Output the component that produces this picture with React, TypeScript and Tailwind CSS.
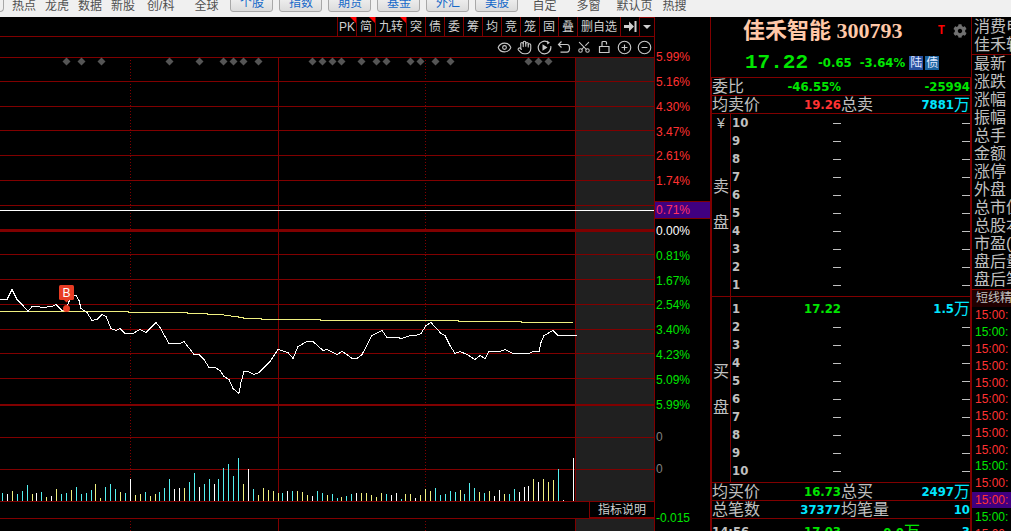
import type { ReactNode } from "react";
import clsx from "clsx";
import { CircleMinus, CirclePlus, Eye, Hand, Scissors } from "lucide-react";
import { FaCog } from "react-icons/fa";

const CJK = "font-['Liberation_Sans','Noto_Sans_CJK_SC',sans-serif]";
const NUM =
  "font-['DejaVu_Sans_Condensed','Noto_Sans_CJK_SC',sans-serif] text-[13px] font-bold";

const MARKETS = ["个股", "指数", "期货", "基金", "外汇", "美股"];

const TOOLS = [
  { label: "PK", flag: true },
  { label: "简", flag: true },
  { label: "九转", flag: true, wide: true },
  { label: "突" },
  { label: "债" },
  { label: "委" },
  { label: "筹" },
  { label: "均" },
  { label: "竞" },
  { label: "笼" },
  { label: "固" },
  { label: "叠" },
  { label: "删自选", wide: true },
];

const AXIS = [
  "5.99%", "5.16%", "4.30%", "3.47%", "2.61%", "1.74%", "", "0.00%",
  "0.81%", "1.67%", "2.54%", "3.40%", "4.23%", "5.09%", "5.99%",
];

const GRID = [81, 106, 130, 155, 180, 205, 254, 279, 304, 329, 353, 378, 437, 469];

const DIAMONDS = [
  66, 81, 101, 169, 199, 223, 233, 243, 258, 312, 322, 332, 341, 361, 376, 386,
  410, 420, 435, 450, 528, 538, 548,
];

const PRICE =
  "0,299 7,299 12,289 17,299 23,305 28,311 32,306 38,306 42,307 52,306 56,304 62,310 66,309 69,301 72,295 76,295 79,300 81,308 87,312 92,320 97,319 102,314 106,316 111,328 116,330 120,328 125,333 133,333 140,329 146,332 156,322 160,327 169,343 180,343 184,341 194,354 199,354 204,359 209,367 215,367 220,370 224,376 229,379 233,388 239,393 241,382 244,371 248,371 254,374 259,372 270,361 278,349 288,352 293,358 298,346 307,341 313,341 323,350 327,349 337,354 342,351 347,354 352,358 357,358 362,354 372,335 382,330 387,337 397,337 402,338 410,335 416,335 421,333 426,325 431,322 441,333 445,335 450,345 455,353 460,351 467,354 475,359 480,355 485,358 489,351 500,351 505,349 513,353 529,353 533,351 539,351 541,342 544,335 553,330 558,335 577,335";

const AVERAGE =
  "0,311 128,311 128,312 187,312 187,313 207,313 207,314 222,314 226,315 236,316 241,317 246,318 261,318 261,319 320,319 320,320 458,320 458,321 521,321 521,322 573,322";

// colour initial + height, one entry per minute bar
const VOLUME =
  "c8 w7 y10 c7 c10 c16 y7 w8 c9 y4 w5 y12 c7 c8 y11 c14 c7 c8 c11 y17 y3 c14 c17 c12 y9 c8 w22 y6 y7 c9 y5 y7 c9 c13 c22 w12 w13 y13 c19 c28 w14 c17 c22 w17 c22 c33 c37 c25 c43 y17 w32 c12 y6 y13 y11 y10 y8 c8 w10 c10 y10 y9 y6 w5 c10 c8 y6 c7 c3 y4 c5 c7 w8 y8 y8 y6 y4 y8 c7 w6 w8 c2 y7 y7 w3 y6 y12 y10 c13 c6 c7 c10 c9 y11 c7 c18 c13 y9 c8 y10 w5 w11 y7 c7 c12 w9 w14 w15 y22 w19 y22 y19 y21 c32 w1 w0 w43".split(" ");

const BAR_COLORS: Record<string, string> = {
  c: "#54f0f0",
  w: "#ffffff",
  y: "#f0f080",
};

const STATS = [
  "最新", "涨跌", "涨幅", "振幅", "总手", "金额", "涨停", "外盘", "总市值",
  "总股本", "市盈(动)", "盘后量", "盘后笔",
];

// r = up, g = down, s = selected
const TICKS = "r g r r r r r r r g r s g r".split(" ");

function NavLink({ children, className }: { children: ReactNode; className?: string }) {
  return (
    <a href="#" className={clsx("whitespace-nowrap", className)}>
      {children}
    </a>
  );
}

function TopNav() {
  return (
    <nav className="flex h-[17px] shrink-0 items-end overflow-hidden bg-[#f0f0f0] pb-[3px] text-xs leading-4 text-[#505050]">
      <span className="mb-0.5 h-5 w-1 shrink-0 rounded-br border-r border-b border-[#a8a8a8]" />
      <div className="flex gap-[9px] pl-2">
        <NavLink>热点</NavLink>
        <NavLink>龙虎</NavLink>
        <NavLink>数据</NavLink>
        <NavLink>新股</NavLink>
      </div>
      <NavLink className="ml-3">创/科</NavLink>
      <NavLink className="ml-5">全球</NavLink>
      <div className="mb-0.5 ml-3 flex gap-1.5">
        {MARKETS.map((m) => (
          <button
            key={m}
            type="button"
            className="h-[18px] w-[43px] rounded-[3px] border border-[#a8a8a8] bg-linear-to-b from-[#f4f4f4] to-[#dcdcdc] leading-4 text-[#1468c8]"
          >
            {m}
          </button>
        ))}
      </div>
      <NavLink className="ml-3.5">自定</NavLink>
      <NavLink className="ml-5">多窗</NavLink>
      <NavLink className="ml-4">默认页</NavLink>
      <NavLink className="ml-2.5">热搜</NavLink>
    </nav>
  );
}

function ReplayIcon() {
  return (
    <svg width="15" height="15" viewBox="0 0 15 15" fill="none" stroke="currentColor" strokeWidth="1.2">
      <path d="M13.7 6.2A6.3 6.3 0 1 1 10.600 2M13.500 8.800A6.300 6.300 0 0 1 11 12.700" />
      <path d="M10 0.500 13 2.800 10.200 4.500z" fill="currentColor" stroke="none" />
      <path d="M5.500 4.200v6.600L10.500 7.500z" fill="currentColor" stroke="none" />
    </svg>
  );
}

function UndoIcon() {
  return (
    <svg width="14" height="14" viewBox="0 0 14 14" fill="none" stroke="currentColor" strokeWidth="1.2">
      <path d="M4.500 1.500 1.500 4.500l3 3M1.500 4.500h8.500a2.500 3.800 0 0 1 0 7.600H3.500" />
    </svg>
  );
}

function UnlockIcon() {
  return (
    <svg width="14" height="14" viewBox="0 0 14 14" fill="none" stroke="currentColor" strokeWidth="1.2">
      <path d="M2.500 6.500h9.500v6h-9.500zM5 6.500V2.500a1 1 0 0 1 1-1h2.500a1 1 0 0 1 1 1V4.500" />
    </svg>
  );
}

function ToolBar() {
  return (
    <div className="flex h-5 shrink-0 justify-end border-b border-[#800000] text-xs text-[#d0d0d0]">
      {TOOLS.map((t) => (
        <button
          key={t.label}
          type="button"
          className={clsx(
            "relative min-w-[19px] border-l border-[#800000] leading-5 whitespace-nowrap",
            t.wide ? "px-[3px]" : "px-px",
          )}
        >
          {t.label}
          {t.flag && (
            <span className="absolute top-0 right-0 border-t-[6px] border-l-[6px] border-t-[#ff0000] border-l-transparent" />
          )}
        </button>
      ))}
      <button
        type="button"
        aria-label="下一个"
        className="flex w-[19px] items-center justify-center border-l border-[#800000]"
      >
        <svg width="13" height="11" viewBox="0 0 13 11" fill="currentColor">
          <path d="M0 4h5V0.500l5 5-5 5V7H0zM10.500 0h2v11h-2z" />
        </svg>
      </button>
      <button
        type="button"
        aria-label="更多"
        className="flex w-[15px] items-center justify-center border-t border-l border-[#800000]"
      >
        <svg width="8" height="4" viewBox="0 0 8 4" fill="currentColor">
          <path d="M0 0h8L4 4z" />
        </svg>
      </button>
    </div>
  );
}

function DrawBar() {
  const icons: [string, ReactNode][] = [
    ["显示", <Eye size={15} strokeWidth={1.8} />],
    ["拖动", <Hand size={15} strokeWidth={1.8} />],
    ["回放", <ReplayIcon />],
    ["撤销", <UndoIcon />],
    ["剪切", <Scissors size={14} strokeWidth={1.8} className="-rotate-90" />],
    ["锁定", <UnlockIcon />],
    ["放大", <CirclePlus size={15} strokeWidth={1.8} />],
    ["缩小", <CircleMinus size={15} strokeWidth={1.8} />],
  ];
  return (
    <div className="flex h-5 shrink-0 items-center justify-end text-[#c8c8c8]">
      {icons.map(([label, icon]) => (
        <button key={label} type="button" aria-label={label} className="flex w-5 justify-center">
          {icon}
        </button>
      ))}
    </div>
  );
}

function Chart() {
  return (
    <svg
      className="h-[445px] w-full shrink-0"
      viewBox="0 57 654 445"
      preserveAspectRatio="none"
      shapeRendering="crispEdges"
    >
      <rect x="576" y="58" width="78" height="443" fill="#202020" />
      <g fill="#800000">
        <rect x="0" y="57" width="654" height="1" />
        {GRID.map((y) => (
          <rect key={y} x="0" y={y} width="654" height="1" />
        ))}
        <rect x="0" y="229" width="654" height="3" />
        <rect x="0" y="404" width="654" height="2" />
        <rect x="0" y="501" width="654" height="1" />
        <rect x="278" y="57" width="1" height="445" />
        <rect x="575" y="57" width="1" height="445" />
      </g>
      <g stroke="#800000" strokeDasharray="1 2">
        <path d="M130.5 60V501M425.5 60V501" />
      </g>
      <rect x="0" y="210" width="654" height="1" fill="#ffffff" />
      {DIAMONDS.map((x) => (
        <path
          key={x}
          d={`M${x + 0.5} 57.5l4 4-4 4-4-4z`}
          fill="#555555"
          shapeRendering="auto"
        />
      ))}
      {VOLUME.map((v, i) => {
        const h = Number(v.slice(1));
        return (
          <rect
            key={i}
            x={Math.round(2 + i * 4.92)}
            y={501 - h}
            width="1"
            height={h}
            fill={BAR_COLORS[v[0]]}
          />
        );
      })}
      <g fill="none" transform="translate(0 0.5)">
        <polyline points={AVERAGE} stroke="#f0f080" />
        <polyline points={PRICE} stroke="#ffffff" />
      </g>
      <g fill="#e83c24" shapeRendering="auto">
        <rect x="59" y="285" width="15" height="15" rx="1.5" />
        <path d="M64 300h5l-2.5 2.5z" />
        <circle cx="66.5" cy="308.5" r="3.5" />
      </g>
      <text
        x="66.5"
        y="297"
        fill="#ffffff"
        fontFamily="Liberation Sans"
        fontSize="12"
        textAnchor="middle"
      >
        B
      </text>
    </svg>
  );
}

function NextPane() {
  return (
    <svg
      className="h-[13px] w-full shrink-0"
      viewBox="0 518 654 13"
      preserveAspectRatio="none"
      shapeRendering="crispEdges"
    >
      <rect x="576" y="519" width="78" height="12" fill="#202020" />
      <path d="M0 518.5H654M278.5 518V531M575.5 518V531" stroke="#800000" />
      <path d="M130.5 521V531M425.5 521V531" stroke="#800000" strokeDasharray="1 2" />
    </svg>
  );
}

function Axis() {
  return (
    <div className="relative flex w-[55px] shrink-0 flex-col pt-7 pl-px text-xs leading-6">
      <div className="flex h-[372px] flex-col justify-between">
        {AXIS.map((label, i) => (
          <div
            key={i}
            className={clsx(
              "h-6",
              i < 7 && "text-[#ff3232]",
              i === 7 && "text-white",
              i > 7 && "text-[#00e600]",
            )}
          >
            {label}
          </div>
        ))}
      </div>
      <div className="mt-2 text-[#808080]">0</div>
      <div className="mt-2 text-[#808080]">0</div>
      <div className="mt-[25px] text-[#00e600]">-0.015</div>
      <div className="absolute inset-x-0 top-[184px] h-[18px] border-y border-[#800000] bg-[#400080] pl-px leading-4 text-[#ff3264]">
        0.71%
      </div>
    </div>
  );
}

type Summary = [string, string, string, string, string, string];

function SummaryRow({ row, unit }: { row: Summary; unit?: string }) {
  const [l1, v1, c1, l2, v2, c2] = row;
  return (
    <div className="flex h-[18px] shrink-0 items-center border-b border-[#800000] text-base leading-4 whitespace-nowrap text-[#c0c0c0]">
      <div className="flex w-[129px] items-center justify-between">
        <span>{l1}</span>
        <span className={clsx(NUM, c1)}>{v1}</span>
      </div>
      <div className="flex flex-1 items-center justify-between">
        <span>{l2}</span>
        <span className={clsx("flex items-center", c2)}>
          <span className={NUM}>{v2}</span>
          {unit}
        </span>
      </div>
    </div>
  );
}

function Dash() {
  return <span className="ml-auto block h-px w-2 bg-[#c0c0c0]" />;
}

function Depth({ side, rows, bid }: { side: string; rows: number[]; bid?: boolean }) {
  return (
    <div className="flex border-b border-[#800000] text-base text-[#c0c0c0]">
      <div className="flex w-[19px] shrink-0 flex-col items-center border-r border-[#800000] leading-[18px]">
        {!bid && <span className="text-sm leading-[18px]">¥</span>}
        <div className={clsx("flex flex-col gap-[18px]", bid ? "mt-[66px]" : "mt-[46px]")}>
          <span>{side}</span>
          <span>盘</span>
        </div>
      </div>
      <table className={clsx("mb-0.5 w-full border-collapse", NUM, bid && "mt-[3px]")}>
        <tbody>
          {rows.map((n) => {
            const filled = bid && n === 1;
            return (
              <tr key={n} className="h-[18px] leading-[18px]">
                <th scope="row" className="p-0 pl-px text-left">
                  {n}
                </th>
                <td className="w-20 p-0 text-right">
                  {filled ? <span className="text-[#00e600]">17.22</span> : <Dash />}
                </td>
                <td className="w-[129px] p-0 text-right">
                  {filled ? (
                    <span className="flex items-center justify-end text-[#00e6ff]">
                      1.5<span className="text-base leading-[18px] font-normal">万</span>
                    </span>
                  ) : (
                    <Dash />
                  )}
                </td>
              </tr>
            );
          })}
        </tbody>
      </table>
    </div>
  );
}

function Quote() {
  return (
    <section className="flex w-[261px] shrink-0 flex-col border-l border-[#800000]">
      <header className="flex h-[60px] shrink-0 flex-col">
        <div className="flex h-7 items-center pl-8">
          <h1 className="font-['Liberation_Serif','Noto_Sans_CJK_SC',serif] text-[22px] leading-7 font-bold whitespace-nowrap text-[#ffc8a8]">
            佳禾智能 300793
          </h1>
          <span className="ml-auto font-['Liberation_Mono',monospace] text-xs font-bold text-[#ff0000]">
            T
          </span>
          <button type="button" aria-label="设置" className="mr-1 ml-2 text-[#707070]">
            <FaCog size={14} />
          </button>
        </div>
        <div className="flex flex-1 items-center pt-1 pl-[34px] text-[#00e600]">
          <span className="font-['Liberation_Mono',monospace] text-[21px] leading-6 font-bold">
            17.22
          </span>
          <span className={clsx(NUM, "ml-2.5")}>-0.65</span>
          <span className={clsx(NUM, "ml-2")}>-3.64%</span>
          <span className="ml-1 bg-[#2850a0] px-px text-xs leading-[14px] text-[#e0e8ff]">陆</span>
          <span className="ml-0.5 bg-[#1c64a0] px-px text-xs leading-[14px] text-[#e0e8ff]">债</span>
        </div>
      </header>
      <div className="flex flex-1 flex-col border-t border-r border-l border-[#800000]">
        <SummaryRow
          row={["委比", "-46.55%", "text-[#00e600]", "", "-25994", "text-[#00e600]"]}
        />
        <SummaryRow
          row={["均卖价", "19.26", "text-[#ff3232]", "总卖", "7881", "text-[#00e6ff]"]}
          unit="万"
        />
        <Depth side="卖" rows={[10, 9, 8, 7, 6, 5, 4, 3, 2, 1]} />
        <Depth side="买" rows={[1, 2, 3, 4, 5, 6, 7, 8, 9, 10]} bid />
        <SummaryRow
          row={["均买价", "16.73", "text-[#00e600]", "总买", "2497", "text-[#00e6ff]"]}
          unit="万"
        />
        <SummaryRow
          row={["总笔数", "37377", "text-[#00e6ff]", "均笔量", "10", "text-[#00e6ff]"]}
        />
        <div className={clsx("flex pt-1 leading-[18px] text-[#c0c0c0]", NUM)}>
          <span className="w-[50px]">14:56</span>
          <span className="w-[79px] text-right text-[#00e600]">17.03</span>
          <span className="w-[79px] text-right text-[#00e600]">
            0.0<span className="text-base leading-[18px] font-normal">万</span>
          </span>
          <span className="flex-1 text-right text-[#00e6ff]">3</span>
        </div>
      </div>
    </section>
  );
}

function SideList() {
  return (
    <aside className="flex w-10 shrink-0 flex-col overflow-hidden border-l border-[#800000] pt-px text-base leading-[18px] whitespace-nowrap text-[#c0c0c0]">
      <div className="border-b border-[#800000] pl-0.5">
        <div>消费电</div>
        <div>佳禾转</div>
      </div>
      <ul className="pl-0.5">
        {STATS.map((s) => (
          <li key={s}>{s}</li>
        ))}
      </ul>
      <div className="border-t border-[#800000] bg-[#200000] pl-1 text-xs leading-[17px]">
        短线精灵
      </div>
      <ul className="flex h-[235px] shrink-0 flex-col text-xs">
        {TICKS.map((t, i) => (
          <li
            key={i}
            className={clsx(
              "flex flex-1 items-center pl-[3px]",
              t === "g" ? "text-[#00e600]" : "text-[#ff3232]",
              t === "s" && "bg-[#400080]",
            )}
          >
            15:00:
          </li>
        ))}
      </ul>
    </aside>
  );
}

export default function App() {
  return (
    <div className={clsx("flex h-screen flex-col overflow-hidden bg-black", CJK)}>
      <TopNav />
      <main className="flex min-h-0 flex-1">
        <section className="flex min-w-0 flex-1 flex-col border-r border-[#800000]">
          <ToolBar />
          <DrawBar />
          <Chart />
          <div className="flex h-4 shrink-0 justify-end">
            <button
              type="button"
              className="border-b border-l border-[#800000] px-2 text-xs leading-4 text-[#d0d0d0]"
            >
              指标说明
            </button>
          </div>
          <NextPane />
        </section>
        <Axis />
        <Quote />
        <SideList />
      </main>
    </div>
  );
}
